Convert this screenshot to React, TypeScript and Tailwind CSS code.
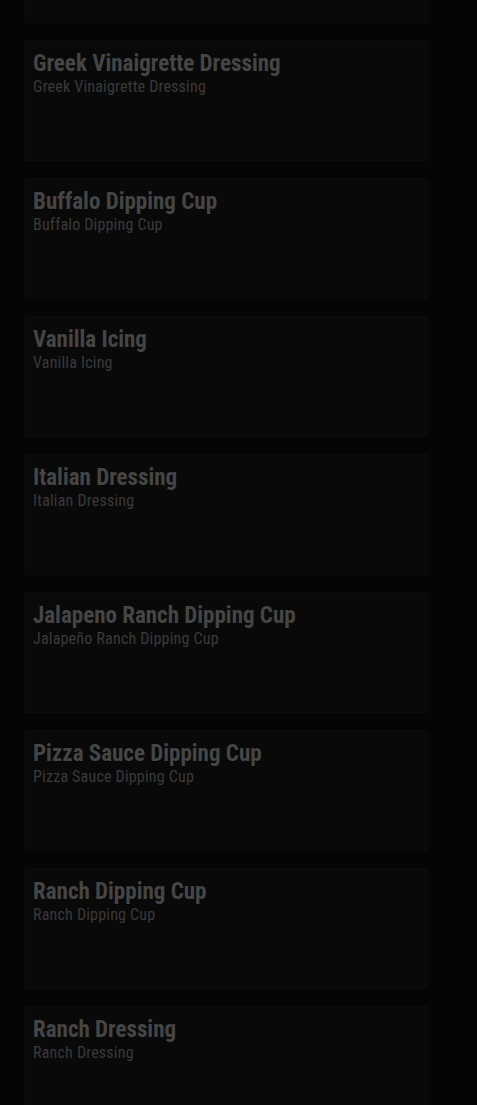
const items = [
  { title: "Greek Vinaigrette Dressing", sub: "Greek Vinaigrette Dressing" },
  { title: "Buffalo Dipping Cup", sub: "Buffalo Dipping Cup" },
  { title: "Vanilla Icing", sub: "Vanilla Icing" },
  { title: "Italian Dressing", sub: "Italian Dressing" },
  { title: "Jalapeno Ranch Dipping Cup", sub: "Jalapeño Ranch Dipping Cup" },
  { title: "Pizza Sauce Dipping Cup", sub: "Pizza Sauce Dipping Cup" },
  { title: "Ranch Dipping Cup", sub: "Ranch Dipping Cup" },
  { title: "Ranch Dressing", sub: "Ranch Dressing" },
]

function Card({ title, sub }: { title?: string; sub?: string }) {
  return (
    <div className="w-[404px] h-[121px] shrink-0 border border-[#120909] bg-[#090909] rounded-[2px] px-2 pt-[9px]">
      {title && (
        <h3 className="text-[23px] leading-[27px] font-bold text-[#454545] [font-stretch:condensed]">{title}</h3>
      )}
      {sub && (
        <p className="text-[16px] leading-[19px] tracking-[0.2px] text-[#3a3a3a] [font-stretch:condensed]">{sub}</p>
      )}
    </div>
  )
}

export default function App() {
  return (
    <div className="h-[1105px] overflow-hidden bg-[#060505] font-['Roboto_Condensed','Roboto',sans-serif]">
      <div className="pl-6 -mt-[98px] flex flex-col gap-[17px]">
        {/* previous card, scrolled mostly out of view */}
        <Card />
        {items.map((it) => (
          <Card key={it.title} title={it.title} sub={it.sub} />
        ))}
      </div>
    </div>
  )
}
